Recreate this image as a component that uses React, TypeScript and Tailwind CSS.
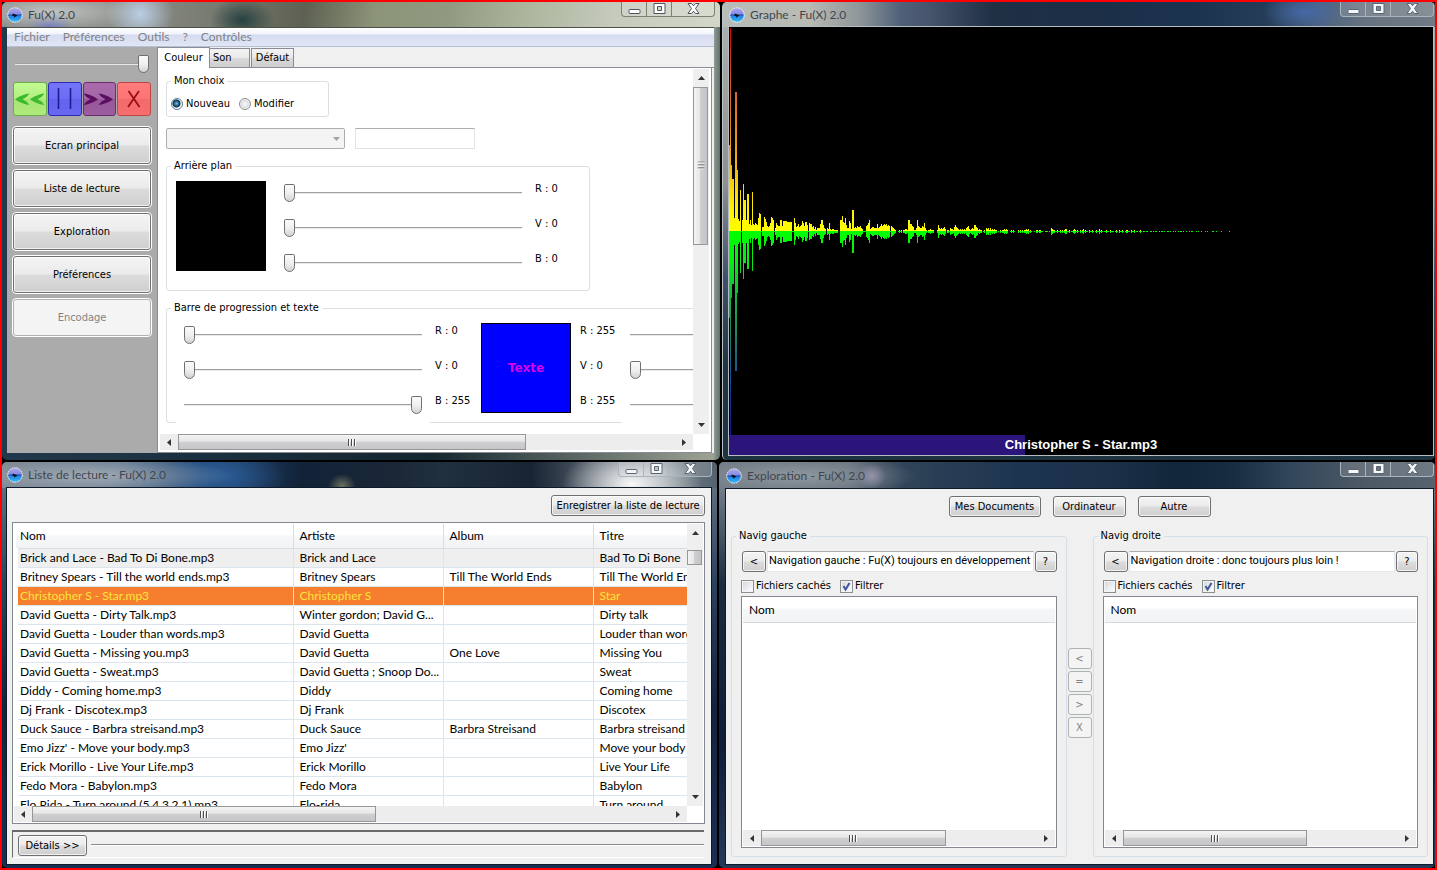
import type { ReactNode } from "react";

const uiFont = "font-['DejaVu_Sans_Condensed','DejaVu_Sans',sans-serif] text-[11px] leading-[14px]";
const listFont = "font-[Lato,'Open_Sans',sans-serif] text-xs";

const btn =
  "flex items-center justify-center rounded-[3px] border border-[#707070] bg-[linear-gradient(#f4f4f4_0%,#ebebeb_48%,#dcdcdc_52%,#cfcfcf_100%)] text-black shadow-[inset_0_0_0_1px_rgba(255,255,255,0.7)]";
const btnOff =
  "flex items-center justify-center rounded-[3px] border border-[#adb2b5] bg-[#f4f4f4] text-[#838383]";

function AppIcon() {
  return (
    <svg viewBox="0 0 16 16" className="size-4 shrink-0" aria-hidden="true">
      <defs>
        <linearGradient id="orb" x1="0" y1="0" x2="0" y2="1">
          <stop offset="0" stopColor="#b0a4ea" />
          <stop offset="0.4" stopColor="#8a8ee6" />
          <stop offset="0.5" stopColor="#2a50b4" />
          <stop offset="0.6" stopColor="#1f86ea" />
          <stop offset="1" stopColor="#39c0f8" />
        </linearGradient>
      </defs>
      <circle cx="8" cy="8" r="7" fill="url(#orb)" />
      <circle cx="8" cy="8" r="7.2" fill="none" stroke="#f2f6fb" strokeWidth="1" strokeDasharray="1.8 0.7" />
      <path d="M6 6.500L10.500 8.400L7 10.800L7.400 9.200L5.200 8.800Z" fill="#0b0f18" />
    </svg>
  );
}

function Caption({ dark }: { dark?: boolean }) {
  const fill = dark ? "#f4f6f8" : "#ffffff";
  const edge = dark ? "#5b6672" : "#4c525e";
  const line = dark ? "border-[#aab4bd]" : "border-[#7c8273]";
  const cell = `flex items-center justify-center border-r pb-px ${line}`;
  return (
    <div className={`flex h-[15px] w-[94px] self-start overflow-hidden rounded-b-[4px] border border-t-0 bg-white/15 ${line}`}>
      <button aria-label="Réduire" className={`${cell} w-[25px]`}>
        <svg viewBox="0 0 13 11" className="h-[11px] w-[13px]">
          <rect x="1" y="6.500" width="11" height="4" rx="1" fill={fill} stroke={edge} />
        </svg>
      </button>
      <button aria-label="Agrandir" className={`${cell} w-[25px]`}>
        <svg viewBox="0 0 13 11" className="h-[11px] w-[13px]">
          <path fillRule="evenodd" d="M1 0.500H12V10.500H1ZM4.500 3.500V7.500H8.500V3.500Z" fill={fill} stroke={edge} />
        </svg>
      </button>
      <button aria-label="Fermer" className="flex flex-1 items-center justify-center pb-px">
        <svg viewBox="0 0 13 11" className="h-[11px] w-[13px]">
          <path
            d="M1 0.500H4.500L6.500 2.800L8.500 0.500H12L8.500 5.500L12 10.500H8.500L6.500 8.200L4.500 10.500H1L4.500 5.500Z"
            fill={fill}
            stroke={edge}
          />
        </svg>
      </button>
    </div>
  );
}

interface FrameProps {
  title: string;
  frame: string;
  bar: string;
  dark?: boolean;
  children: ReactNode;
}

function Frame({ title, frame, bar, dark, children }: FrameProps) {
  return (
    <section className={`flex min-h-0 min-w-0 flex-col overflow-hidden rounded-[5px] ${frame}`}>
      <header className={`flex shrink-0 items-center gap-[5px] ${bar}`}>
        <AppIcon />
        <h2 className={`${listFont} flex-1 text-[#3f464e]`}>{title}</h2>
        <Caption dark={dark} />
      </header>
      {children}
    </section>
  );
}

function Grip({ className }: { className: string }) {
  return (
    <svg viewBox="0 0 8 7" className={className} aria-hidden="true">
      <path d="M0.500 0V7M3.500 0V7M6.500 0V7" stroke="#4d4d4d" />
      <path d="M1.500 0V7M4.500 0V7M7.500 0V7" stroke="#ffffff" />
    </svg>
  );
}

function HScroll({ thumb }: { thumb: string }) {
  return (
    <div className="flex h-4 shrink-0 bg-[#ededed]">
      <button aria-label="Défiler à gauche" className="flex w-[18px] items-center justify-center">
        <svg viewBox="0 0 4 7" className="h-[7px] w-1"><path d="M4 0V7L0 3.500Z" fill="#333" /></svg>
      </button>
      <div className="flex flex-1">
        <div className={`flex items-center justify-center border border-[#979797] bg-[linear-gradient(#f4f4f4_0%,#e6e6e8_45%,#cfcfd2_50%,#c6c6ca_100%)] ${thumb}`}>
          <Grip className="h-[7px] w-2" />
        </div>
      </div>
      <button aria-label="Défiler à droite" className="flex w-[18px] items-center justify-center">
        <svg viewBox="0 0 4 7" className="h-[7px] w-1"><path d="M0 0V7L4 3.500Z" fill="#333" /></svg>
      </button>
    </div>
  );
}

function VScroll({ thumb, grip }: { thumb: string; grip?: boolean }) {
  return (
    <div className="flex w-4 shrink-0 flex-col bg-[#efefef]">
      <button aria-label="Défiler vers le haut" className="flex h-[18px] items-center justify-center">
        <svg viewBox="0 0 7 4" className="h-1 w-[7px]"><path d="M0 4H7L3.500 0Z" fill="#333" /></svg>
      </button>
      <div className="min-h-0 flex-1">
        <div className={`flex w-[15px] items-center justify-center border border-[#979797] bg-[linear-gradient(90deg,#f4f4f4_0%,#e6e6e8_45%,#cfcfd2_50%,#c2c2c8_100%)] ${thumb}`}>
          {grip && <Grip className="h-[7px] w-2 rotate-90" />}
        </div>
      </div>
      <button aria-label="Défiler vers le bas" className="flex h-[18px] items-center justify-center">
        <svg viewBox="0 0 7 4" className="h-1 w-[7px]"><path d="M0 0H7L3.500 4Z" fill="#333" /></svg>
      </button>
    </div>
  );
}

function Slider({ label, value, className }: { label: string; value: number; className: string }) {
  return (
    <input
      type="range"
      min={0}
      max={255}
      defaultValue={value}
      aria-label={label}
      className={`h-5 shrink-0 appearance-none bg-transparent [&::-webkit-slider-runnable-track]:h-[2px] [&::-webkit-slider-runnable-track]:border-t [&::-webkit-slider-runnable-track]:border-[#9f9f9f] [&::-webkit-slider-runnable-track]:bg-[#e9e9e9] [&::-webkit-slider-thumb]:-mt-[9px] [&::-webkit-slider-thumb]:h-[18px] [&::-webkit-slider-thumb]:w-[11px] [&::-webkit-slider-thumb]:appearance-none [&::-webkit-slider-thumb]:rounded-t-[2px] [&::-webkit-slider-thumb]:rounded-b-[6px] [&::-webkit-slider-thumb]:border [&::-webkit-slider-thumb]:border-[#6f6f6f] [&::-webkit-slider-thumb]:bg-[linear-gradient(#fbfbfb_0%,#f0f0f0_50%,#d3d3d3_100%)] ${className}`}
    />
  );
}

function Sliders({ group, values, className }: { group: string; values: number[]; className: string }) {
  return (
    <div className={`flex flex-col gap-[15px] pt-2.5 ${className}`}>
      {["R", "V", "B"].map((c, i) => (
        <Slider key={c} label={`${group} ${c}`} value={values[i]} className="w-[238px]" />
      ))}
    </div>
  );
}

function Values({ values, className }: { values: number[]; className: string }) {
  return (
    <div className={`flex shrink-0 flex-col gap-[21px] whitespace-nowrap pt-[9px] ${className}`}>
      {["R", "V", "B"].map((c, i) => (
        <span key={c}>{`${c} : ${values[i]}`}</span>
      ))}
    </div>
  );
}

const legend = "ml-1 px-[3px]";
const radio =
  "size-3 appearance-none rounded-full border border-[#8e8f8f] bg-[radial-gradient(circle,#ffffff_0%,#dcdfe2_45%,#f4f4f4_75%)] checked:border-[#5b7d93] checked:bg-[radial-gradient(circle_at_45%_45%,#6fc3ea_0%,#0d3c5c_40%,#12405f_46%,#f4f4f4_58%)]";

function ColourTab() {
  return (
    <div className="min-w-0 flex-1 overflow-hidden pl-[6px] pt-[5px]">
      <fieldset className="w-[163px] rounded-[3px] border border-[#d9dfe3] pb-[5px]">
        <legend className={legend}>Mon choix</legend>
        <div className="flex items-center gap-[9px] pl-1 pt-[9px]">
          <label className="flex items-center gap-[3px]">
            <input type="radio" name="choix" defaultChecked className={radio} />
            Nouveau
          </label>
          <label className="flex items-center gap-[3px]">
            <input type="radio" name="choix" className={radio} />
            Modifier
          </label>
        </div>
      </fieldset>

      <div className="mt-[11px] flex gap-2.5">
        <div className="relative w-[179px]">
          <select disabled aria-label="Thème" className="h-[21px] w-full appearance-none rounded-[2px] border border-[#adadad] bg-[#f4f4f4]" />
          <svg viewBox="0 0 7 4" className="pointer-events-none absolute right-[5px] top-[9px] h-1 w-[7px]"><path d="M0 0H7L3.500 4Z" fill="#a3a3a3" /></svg>
        </div>
        <input aria-label="Nom du thème" className="h-[21px] w-[120px] border border-[#e0e3e8] border-t-[#abadb3] bg-white" />
      </div>

      <fieldset className="mt-2.5 w-[424px] rounded-[3px] border border-[#d9dfe3] pb-[17px]">
        <legend className={legend}>Arrière plan</legend>
        <div className="flex items-start pl-[9px]">
          <div className="mt-2 size-[90px] shrink-0 bg-black" />
          <Sliders group="Arrière plan" values={[0, 0, 0]} className="ml-[18px]" />
          <Values values={[0, 0, 0]} className="ml-[13px]" />
        </div>
      </fieldset>

      <fieldset className="mt-2.5 w-[720px] rounded-[3px] border border-[#d9dfe3]">
        <legend className={legend}>Barre de progression et texte</legend>
        <div className="-mb-px flex pl-[9px]">
          <Sliders group="Barre" values={[0, 0, 255]} className="w-[254px] shrink-0 bg-white pl-2" />
          <Values values={[0, 0, 255]} className="ml-[5px] w-[46px]" />
          <div className="mb-2.5 mt-2 flex size-[90px] shrink-0 items-center justify-center border border-black bg-[#0000ff] font-['DejaVu_Sans',sans-serif] text-xs font-bold text-[#d800e8]">
            Texte
          </div>
          <Values values={[255, 0, 255]} className="ml-[9px] w-[42px]" />
          <Sliders group="Texte" values={[255, 0, 255]} className="w-[254px] shrink-0 bg-white pl-2" />
        </div>
      </fieldset>
    </div>
  );
}

function Transport() {
  const base = "flex h-[34px] items-center justify-center rounded-[3px] border";
  return (
    <div className="grid grid-cols-4 gap-px">
      <button aria-label="Précédent" className={`${base} border-[#6aae48] bg-[linear-gradient(#c2fa92_0%,#b2ee80_50%,#a8e676_52%,#aeea7c_100%)]`}>
        <svg viewBox="0 0 32 32" className="size-8 shrink-0">
          <path d="M15.500 10.500C10 11 4 14 1 16.300C4 18.600 10 21.600 15.500 22L12.500 18.500L8.500 16.300L12.500 14ZM30.500 10.500C25 11 19 14 16 16.300C19 18.600 25 21.600 30.500 22L27.500 18.500L23.500 16.300L27.500 14Z" fill="#3dba2e" />
        </svg>
      </button>
      <button aria-label="Pause" className={`${base} border-[#2a2ab0] bg-[linear-gradient(#7474fa_0%,#6c6cf4_48%,#6262ec_52%,#6868f2_100%)]`}>
        <svg viewBox="0 0 32 32" className="size-8 shrink-0">
          <path d="M9.500 5V26M21.500 5V26" stroke="#1c1c94" strokeWidth="1.600" />
        </svg>
      </button>
      <button aria-label="Suivant" className={`${base} border-[#6b2c6e] bg-[linear-gradient(#aa6aac_0%,#a566a6_48%,#975799_52%,#9c5e9e_100%)]`}>
        <svg viewBox="0 0 32 32" className="size-8 shrink-0">
          <path d="M0.500 10.500C6 11 12 14 15 16.300C12 18.600 6 21.600 0.500 22L3.500 18.500L7.500 16.300L3.500 14ZM15.500 10.500C21 11 27 14 30 16.300C27 18.600 21 21.600 15.500 22L18.500 18.500L22.500 16.300L18.500 14Z" fill="#5c0f62" />
        </svg>
      </button>
      <button aria-label="Arrêter" className={`${base} border-[#c04545] bg-[linear-gradient(#ff7c7c_0%,#fc7575_48%,#f26a6a_52%,#f66e6e_100%)]`}>
        <svg viewBox="0 0 32 32" className="size-8 shrink-0">
          <path d="M10.500 8L21.500 24M21 8L10 24" stroke="#9a0f14" strokeWidth="1.800" fill="none" />
        </svg>
      </button>
    </div>
  );
}

function MainWindow() {
  return (
    <Frame
      title="Fu(X) 2.0"
      frame="mr-px mb-[2px] pl-[5px] pr-[6px] pb-[7px] bg-[linear-gradient(90deg,#22384c_0%,#14262f_60%,#9ca394_99%,#5f6f70_100%)]"
      bar="-ml-[5px] -mr-[6px] h-[25px] pl-[5px] pr-[5px] bg-[radial-gradient(ellipse_80px_18px_at_50px_10px,rgba(215,218,218,0.7),transparent),radial-gradient(ellipse_24px_12px_at_48px_24px,rgba(70,90,210,0.6),transparent),radial-gradient(ellipse_34px_30px_at_138px_12px,rgba(190,210,235,0.95),transparent),radial-gradient(ellipse_32px_22px_at_240px_18px,rgba(30,60,60,0.9),transparent),linear-gradient(100deg,#8b8f8e_0%,#8f918c_15%,#74776c_32%,#5d6052_42%,#8c9478_52%,#8f9a80_62%,#aab49a_72%,#c5cabd_85%,#d3d7c8_100%)]"
    >
      <nav className={`${listFont} flex h-5 shrink-0 items-center gap-[13px] border-t border-b border-t-[#4a4f48] border-b-[#b8bfd2] bg-[linear-gradient(#ffffff_0%,#f0f3fa_34%,#d6dcf0_38%,#e0e6f5_100%)] pl-[7px] leading-4 text-[#7f8187]`}>
        {["Fichier", "Préférences", "Outils", "?", "Contrôles"].map((m) => (
          <a key={m} href="#">{m}</a>
        ))}
      </nav>
      <div className={`${uiFont} flex min-h-0 flex-1`}>
        <aside className="w-[150px] shrink-0 bg-[#ababab] px-[6px]">
          <div className="pl-0.5 pt-[7px]">
            <Slider label="Volume" value={255} className="w-[134px]" />
          </div>
          <div className="pt-1">
            <Transport />
          </div>
          <div className="mt-[11px] flex flex-col gap-1.5">
            {["Ecran principal", "Liste de lecture", "Exploration", "Préférences"].map((b) => (
              <button key={b} className={`${btn} h-[37px] outline outline-white`}>{b}</button>
            ))}
            <button disabled className={`${btnOff} h-[37px] outline outline-white`}>Encodage</button>
          </div>
        </aside>
        <div className="flex min-w-0 flex-1 flex-col bg-[#f0f0f0]">
          <div role="tablist" className="flex h-[21px] shrink-0 items-end border-b border-[#898c95]">
            <button role="tab" aria-selected="true" className="-mb-px h-[21px] w-[53px] border-x border-t border-[#898c95] bg-white">Couleur</button>
            <button role="tab" aria-selected="false" className="h-[19px] w-[40px] border-r border-t border-[#898c95] bg-[linear-gradient(#f3f3f3_0%,#e9e9e9_48%,#d9d9d9_52%,#cfcfcf_100%)] pl-[3px] text-left">Son</button>
            <button role="tab" aria-selected="false" className="ml-px h-[19px] w-[43px] border-x border-t border-[#898c95] bg-[linear-gradient(#f3f3f3_0%,#e9e9e9_48%,#d9d9d9_52%,#cfcfcf_100%)]">Défaut</button>
          </div>
          <div className="mr-0.5 flex min-h-0 flex-1 flex-col border-x border-b border-[#898c95] bg-white p-0.5 pt-px">
            <div className="flex min-h-0 flex-1">
              <ColourTab />
              <VScroll thumb="h-[48%]" grip />
            </div>
            <div className="flex pr-4">
              <div className="min-w-0 flex-1"><HScroll thumb="w-[70%]" /></div>
            </div>
          </div>
        </div>
      </div>
    </Frame>
  );
}

/* Magnitudes of the spectrum, one value per bin, mirrored around the axis. */
const bins = [
  87, 204, 67, 53, 53, 14, 140, 140, 62, 13, 11, 42, 1, 12, 48, 32, 32, 12, 38, 38, 8, 12, 7, 40, 8, 7, 9, 8, 7, 14, 19, 18, 1, 5, 5, 15, 13, 10, 6, 5, 6, 9, 15, 14, 12,
  1, 4, 9, 7, 6, 6, 12, 12, 6, 11, 11, 11, 11, 10, 10, 10, 10, 10, 1, 1, 14, 9, 5, 6, 8, 5, 6, 7, 11, 9, 6, 10, 10, 7, 1, 9, 8, 8, 5, 6, 3, 5, 2, 4, 4, 4, 8, 12, 12,
  7, 4, 3, 0, 4, 3, 9, 3, 2, 3, 3, 2, 2, 2, 2, 0, 0, 12, 12, 16, 10, 9, 14, 7, 4, 4, 11, 9, 3, 22, 22, 4, 5, 4, 6, 5, 5, 6, 4, 3, 1, 1, 1, 6, 7, 9, 12, 3, 4, 5, 5, 4, 4,
  4, 8, 4, 5, 6, 8, 6, 7, 8, 7, 8, 6, 7, 6, 1, 6, 5, 4, 3, 2, 0, 0, 1, 2, 1, 2, 0, 2, 2, 3, 3, 2, 12, 12, 8, 8, 6, 5, 2, 2, 4, 12, 6, 5, 4, 4, 6, 5, 9, 4, 2, 1, 2, 2, 3,
  2, 2, 2, 0, 0, 0, 2, 7, 4, 3, 4, 3, 4, 5, 3, 0, 2, 2, 1, 4, 3, 3, 2, 5, 7, 5, 4, 3, 2, 3, 2, 3, 2, 3, 2, 4, 5, 6, 3, 2, 3, 4, 3, 7, 7, 5, 4, 2, 3, 2, 2, 0, 1, 2, 0, 4,
  3, 4, 2, 4, 2, 3, 2, 3, 2, 2, 0, 1, 0, 2, 1, 2, 2, 3, 2, 3, 2, 0, 0, 1, 2, 1, 2, 1, 0, 0, 0, 2, 1, 2, 1, 2, 1, 2, 2, 3, 2, 3, 1, 2, 1, 0, 0, 1, 0, 2, 2, 1, 2, 2, 1, 1,
  0, 0, 1, 1, 1, 0, 1, 0, 4, 3, 2, 2, 1, 1, 2, 1, 1, 2, 1, 2, 1, 2, 3, 3, 1, 1, 2, 0, 1, 1, 2, 3, 2, 1, 2, 1, 0, 2, 1, 2, 3, 1, 2, 1, 1, 0, 2, 1, 1, 2, 1, 0, 1, 2, 1, 1,
  3, 1, 2, 1, 0, 1, 1, 2, 1, 1, 0, 2, 1, 1, 1, 0, 1, 2, 1, 0, 2, 1, 1, 2, 1, 0, 1, 2, 2, 1, 1, 0, 2, 1, 1, 2, 0, 1, 1, 0, 1, 2, 1, 0, 1, 1, 0, 1, 1, 0, 0, 1, 1, 0, 1, 0,
  1, 1, 0, 0, 1, 0, 1, 1, 0, 1, 0, 0, 1, 1, 0, 1, 0, 0, 1, 0, 1, 0, 0, 1, 0, 1, 1, 0, 1, 0, 0, 1, 0, 0, 1, 0, 1, 1, 0, 0, 0, 1, 0, 1, 0, 0, 1, 0, 0, 0, 1, 0, 1, 0, 0, 0,
  0, 1, 1, 0, 0, 1, 0, 0, 0, 0, 1, 0, 0, 0, 0, 0, 0, 0, 1,
];
const upper = bins.map((h, i) => (h ? `M${i} 205v-${h}h1v${h}z` : "")).join("");
const lower = bins.map((h, i) => (h ? `M${i} 205v${h}h1v-${h}z` : "")).join("");

function GraphWindow() {
  return (
    <Frame
      title="Graphe - Fu(X) 2.0"
      dark
      frame="mb-[2px] ml-px border-l border-[#b9c2c4] pl-[6px] pr-[2px] pb-[5px] bg-[linear-gradient(#aeb4b0_0%,#8d8f90_40%,#41506a_60%,#22343f_80%,#1d333f_100%)]"
      bar="-ml-[6px] -mr-[2px] h-[25px] pl-[6px] pr-[1px] bg-[radial-gradient(ellipse_40px_18px_at_580px_10px,rgba(70,110,185,0.7),transparent),linear-gradient(90deg,#b7bcb8_0%,#b9bbb4_12%,#8f9799_19%,#4f6078_25%,#46546c_29%,#1f2f44_38%,#1b2f48_55%,#1c3350_66%,#243c58_76%,#4d637f_84%,#66727f_90%,#717a84_100%)]"
    >
      <div className="flex min-h-0 flex-1 flex-col bg-black outline outline-[#b4bcc4]">
        <svg viewBox="0 0 704 409" preserveAspectRatio="none" shapeRendering="crispEdges" className="min-h-0 w-full flex-1" role="img" aria-label="Spectre audio">
          <defs>
            <linearGradient id="hot" gradientUnits="userSpaceOnUse" x1="0" y1="0" x2="0" y2="205">
              <stop offset="0" stopColor="#c80808" />
              <stop offset="0.320" stopColor="#d8662c" />
              <stop offset="0.600" stopColor="#f0a010" />
              <stop offset="0.880" stopColor="#fff000" />
              <stop offset="1" stopColor="#ffff00" />
            </linearGradient>
            <linearGradient id="cold" gradientUnits="userSpaceOnUse" x1="0" y1="205" x2="0" y2="409">
              <stop offset="0" stopColor="#00ff00" />
              <stop offset="0.150" stopColor="#06ee14" />
              <stop offset="0.420" stopColor="#1a9a52" />
              <stop offset="0.680" stopColor="#1d5590" />
              <stop offset="1" stopColor="#10108a" />
            </linearGradient>
          </defs>
          <path d={upper} fill="url(#hot)" />
          <path d={lower} fill="url(#cold)" />
        </svg>
        <div className="flex h-5 shrink-0 items-center justify-center bg-[linear-gradient(90deg,#2b157a_42%,#000000_42%)] font-['Liberation_Sans',Arial,sans-serif] text-[13px] font-bold text-white">
          Christopher S - Star.mp3
        </div>
      </div>
    </Frame>
  );
}

const tracks: [string, string, string, string][] = [
  ["Brick and Lace - Bad To Di Bone.mp3", "Brick and Lace", "", "Bad To Di Bone"],
  ["Britney Spears - Till the world ends.mp3", "Britney Spears", "Till The World Ends", "Till The World Ends"],
  ["Christopher S - Star.mp3", "Christopher S", "", "Star"],
  ["David Guetta - Dirty Talk.mp3", "Winter gordon; David G...", "", "Dirty talk"],
  ["David Guetta - Louder than words.mp3", "David Guetta", "", "Louder than words"],
  ["David Guetta - Missing you.mp3", "David Guetta", "One Love", "Missing You"],
  ["David Guetta - Sweat.mp3", "David Guetta ; Snoop Do...", "", "Sweat"],
  ["Diddy - Coming home.mp3", "Diddy", "", "Coming home"],
  ["Dj Frank - Discotex.mp3", "Dj Frank", "", "Discotex"],
  ["Duck Sauce - Barbra streisand.mp3", "Duck Sauce", "Barbra Streisand", "Barbra streisand"],
  ["Emo Jizz' - Move your body.mp3", "Emo Jizz'", "", "Move your body"],
  ["Erick Morillo - Live Your Life.mp3", "Erick Morillo", "", "Live Your Life"],
  ["Fedo Mora - Babylon.mp3", "Fedo Mora", "", "Babylon"],
  ["Flo Rida - Turn around (5,4,3,2,1).mp3", "Flo-rida", "", "Turn around"],
];

function PlaylistWindow() {
  return (
    <Frame
      title="Liste de lecture - Fu(X) 2.0"
      dark
      frame="mr-[2px] pl-[5px] pr-[6px] pb-[4px] bg-[linear-gradient(#6d7985_0%,#2a4260_30%,#142240_60%,#1a2f55_100%)]"
      bar="-ml-[5px] -mr-[6px] h-[26px] pl-[5px] pr-[5px] bg-[radial-gradient(ellipse_140px_20px_at_90px_14px,rgba(170,178,186,0.85),transparent),radial-gradient(ellipse_60px_30px_at_225px_14px,rgba(50,110,180,0.6),transparent),radial-gradient(ellipse_14px_12px_at_340px_24px,rgba(190,190,130,0.5),transparent),radial-gradient(ellipse_70px_40px_at_630px_22px,rgba(250,250,250,1),transparent),linear-gradient(90deg,#7b8590_0%,#62778f_16%,#234a78_28%,#122238_42%,#1b2737_55%,#20303f_62%,#182433_74%,#5a6470_84%,#7c8790_92%,#54626f_100%)]"
    >
      <div className={`${uiFont} flex min-h-0 flex-1 flex-col bg-[#f0f0f0] pb-1.5 pl-[5px] pr-[6px] pt-[7px] outline outline-[#0d1a2a]`}>
        <div className="flex justify-end">
          <button className={`${btn} h-[21px] w-[154px] whitespace-nowrap`}>Enregistrer la liste de lecture</button>
        </div>
        <div className="mt-[6px] flex min-h-0 flex-1 flex-col border border-[#828790] bg-white p-px">
          <div className="flex min-h-0 flex-1">
            <div className="min-w-0 flex-1 overflow-hidden">
              <table className={`${listFont} w-[773px] table-fixed border-collapse text-left text-black`}>
                <colgroup>
                  <col className="w-[277px]" />
                  <col className="w-[150px]" />
                  <col className="w-[150px]" />
                  <col className="w-[196px]" />
                </colgroup>
                <thead>
                  <tr className="h-[24px] bg-[linear-gradient(#ffffff_0%,#ffffff_45%,#f5f7f9_50%,#f1f3f5_100%)]">
                    {["Nom", "Artiste", "Album", "Titre"].map((h) => (
                      <th key={h} className="border-b border-r border-[#d8dde2] py-0 pl-1.5 font-normal first:pl-1">{h}</th>
                    ))}
                  </tr>
                </thead>
                <tbody>
                  {tracks.map((t, i) => (
                    <tr
                      key={t[0]}
                      className={
                        i === 2
                          ? "h-[19px] bg-[#f57f2e] text-[#fbe43c]"
                          : i === 0
                            ? "h-[19px] bg-[#efefef]"
                            : "h-[19px] bg-white"
                      }
                    >
                      {t.map((c, j) => (
                        <td key={j} className="overflow-hidden whitespace-nowrap border-b border-r border-[#dce5ee] py-0 pl-1.5 leading-[18px] first:border-l-4 first:border-l-white first:pl-0.5">{c}</td>
                      ))}
                    </tr>
                  ))}
                </tbody>
              </table>
            </div>
            <VScroll thumb="mt-2 h-[15px]" />
          </div>
          <div className="pr-4"><HScroll thumb="w-[54%]" /></div>
        </div>
        <div className="mr-px mt-[6px] flex h-7 shrink-0 items-end gap-1 border-l border-t-2 border-b border-[#696969] border-b-white pb-px pl-[5px]">
          <button className={`${btn} h-[21px] w-[69px] shrink-0`}>{"Détails >>"}</button>
          <div className="mb-[10px] h-0.5 flex-1 border-t border-[#8a8a8a] bg-white" />
        </div>
      </div>
    </Frame>
  );
}

function Browser({ name, message, id }: { name: string; message: string; id: string }) {
  const box =
    "peer size-[13px] appearance-none border border-[#8e8f8f] bg-[linear-gradient(135deg,#d2d6dc,#ffffff)] shadow-[inset_0_0_0_1px_#f4f4f4]";
  return (
    <fieldset className="flex min-h-0 min-w-0 flex-1 flex-col rounded-[3px] border border-[#d5dfe5]">
      <legend className={legend}>{name}</legend>
      <div className="flex min-h-0 flex-1 flex-col px-[9px] pb-2 pt-2">
        <div className="flex shrink-0">
          <button aria-label="Dossier parent" className={`${btn} ml-px h-[21px] w-6 shrink-0`}>{"<"}</button>
          <input
            aria-label={name}
            defaultValue={message}
            className="mx-px h-[21px] min-w-0 flex-1 border border-[#e3e9ef] border-t-[#abadb3] bg-white pb-[3px] pl-px font-[Roboto,sans-serif] text-[11px] text-black"
          />
          <button aria-label="Aide" className={`${btn} h-[21px] w-[22px] shrink-0`}>?</button>
        </div>
        <div className="mt-[7px] flex shrink-0 items-center gap-[9px]">
          <div className="flex items-center gap-0.5">
            <input type="checkbox" id={`${id}-caches`} className={box} />
            <label htmlFor={`${id}-caches`}>Fichiers cachés</label>
          </div>
          <div className="relative flex items-center gap-0.5">
            <input type="checkbox" id={`${id}-filtrer`} defaultChecked className={box} />
            <svg viewBox="0 0 13 13" className="pointer-events-none absolute left-0 top-px size-[13px] opacity-0 peer-checked:opacity-100">
              <path d="M3.500 6L5.600 9.500L9.500 3" fill="none" stroke="#42579b" strokeWidth="2" />
            </svg>
            <label htmlFor={`${id}-filtrer`}>Filtrer</label>
          </div>
        </div>
        <div className="mt-[3px] flex min-h-0 flex-1 flex-col border border-[#828790] bg-white p-px">
          <table className={`${listFont} w-full`}>
            <thead>
              <tr className="h-6 bg-[linear-gradient(#ffffff_0%,#ffffff_42%,#f5f7f9_46%,#f1f3f5_100%)]">
                <th className="border-b border-[#d5d9de] py-0 pl-1.5 text-left font-normal">Nom</th>
              </tr>
            </thead>
          </table>
          <div className="min-h-0 flex-1" />
          <HScroll thumb="w-[67%]" />
        </div>
      </div>
    </fieldset>
  );
}

function ExplorerWindow() {
  return (
    <Frame
      title="Exploration - Fu(X) 2.0"
      dark
      frame="pl-[7px] pr-[2px] pb-[4px] bg-[linear-gradient(#8c949a_0%,#5c6a78_12%,#1c2c3e_30%,#101c38_70%,#263a5a_100%)]"
      bar="-ml-[7px] -mr-[2px] h-[27px] pl-[7px] pr-[1px] bg-[radial-gradient(ellipse_120px_20px_at_80px_14px,rgba(150,158,166,0.85),transparent),radial-gradient(ellipse_14px_12px_at_153px_14px,rgba(200,170,210,0.6),transparent),linear-gradient(90deg,#6f7a84_0%,#64707c_18%,#2f4358_26%,#1d3450_42%,#1b3048_55%,#12263a_64%,#182c42_72%,#33475c_80%,#4d5965_90%,#56626e_100%)]"
    >
      <div className={`${uiFont} flex min-h-0 flex-1 flex-col bg-[#f0f0f0] pb-[7px] pl-[5px] pr-[5px] pt-[7px] outline outline-[#0d1a2a]`}>
        <div className="flex shrink-0 justify-center gap-3">
          <button className={`${btn} h-[21px] w-[92px]`}>Mes Documents</button>
          <button className={`${btn} h-[21px] w-[73px]`}>Ordinateur</button>
          <button className={`${btn} h-[21px] w-[73px]`}>Autre</button>
        </div>
        <div className="mt-3 flex min-h-0 flex-1 gap-px">
          <Browser id="gauche" name="Navig gauche" message="Navigation gauche : Fu(X) toujours en développement" />
          <div className="flex w-6 shrink-0 flex-col justify-center gap-0.5">
            {["<", "=", ">", "X"].map((s) => (
              <button key={s} disabled className={`${btnOff} h-[21px]`}>{s}</button>
            ))}
          </div>
          <Browser id="droite" name="Navig droite" message="Navigation droite : donc toujours plus loin !" />
        </div>
      </div>
    </Frame>
  );
}

export default function App() {
  return (
    <main className="grid h-screen min-h-[700px] grid-rows-[460fr_406fr] bg-black outline-2 -outline-offset-2 outline-[#ff0000] p-0.5 text-black">
      <div className="grid min-h-0 grid-cols-[719fr_714fr]">
        <MainWindow />
        <GraphWindow />
      </div>
      <div className="grid min-h-0 grid-cols-[717fr_716fr]">
        <PlaylistWindow />
        <ExplorerWindow />
      </div>
    </main>
  );
}
